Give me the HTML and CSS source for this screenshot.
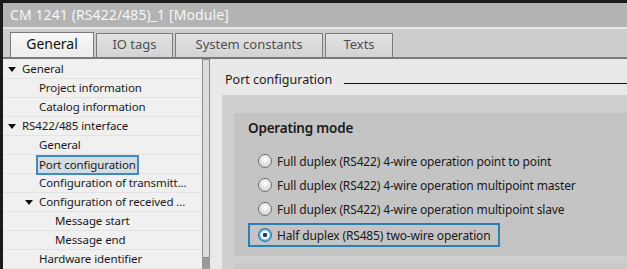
FILE: index.html
```html
<!DOCTYPE html>
<html lang="en">

<head>
    <meta charset="UTF-8">
    <title>CM 1241 Properties</title>
    <link rel="stylesheet" href="styles.css">
</head>

<body>
    <div class="frame">
        <div class="title">CM 1241 (RS422/485)_1 [Module]</div>
        <div class="tabs">
            <div class="tab active">General</div>
            <div class="tab">IO tags</div>
            <div class="tab">System constants</div>
            <div class="tab">Texts</div>
        </div>

        <div class="main">
            <div class="tree">
                <div class="row lv0"><span class="tri"></span>General</div>
                <div class="row lv1">Project information</div>
                <div class="row lv1">Catalog information</div>
                <div class="row lv0"><span class="tri"></span>RS422/485 interface</div>
                <div class="row lv1">General</div>
                <div class="row lv1"><span class="sel">Port configuration</span></div>
                <div class="row lv1">Configuration of transmitt...</div>
                <div class="row lv1 open"><span class="tri"></span>Configuration of received ...</div>
                <div class="row lv2">Message start</div>
                <div class="row lv2">Message end</div>
                <div class="row lv1">Hardware identifier</div>
            </div>
            <div class="scroll">
                <div class="track"></div>
                <div class="thumb"></div>
            </div>

            <div class="content">
                <div class="heading">
                    <span>Port configuration</span>
                    <div class="rule"></div>
                </div>
                <div class="section">
                    <div class="group">
                        <div class="group-title">Operating mode</div>
                        <div class="options">
                            <div class="opt"><span class="radio"></span>Full duplex (RS422) 4-wire operation point to point</div>
                            <div class="opt"><span class="radio"></span>Full duplex (RS422) 4-wire operation multipoint master</div>
                            <div class="opt"><span class="radio"></span>Full duplex (RS422) 4-wire operation multipoint slave</div>
                            <div class="opt checked"><span class="radio"></span>Half duplex (RS485) two-wire operation</div>
                        </div>
                    </div>
                    <div class="group next"></div>
                </div>
            </div>
        </div>
    </div>
</body>

</html>
```

FILE: styles.css
```css
* {
    box-sizing: border-box;
}

body {
    margin: 0;
    width: 627px;
    height: 269px;
    overflow: hidden;
    font-family: "Noto Sans", "Open Sans", sans-serif;
    font-size: 12px;
    color: #1a1a1a;
}

.frame {
    height: 269px;
    border-top: 3px solid #1b1b1b;
    border-left: 3px solid #1b1b1b;
    background-color: #e9e9e9;
    display: flex;
    flex-direction: column;
}

.title {
    height: 26px;
    line-height: 24px;
    padding-left: 7px;
    background-color: #b3b3b3;
    color: #f6f6f6;
    font-size: 14px;
    letter-spacing: 0.1px;
    border-bottom: 2px solid #e6e6e6;
}

.tabs {
    height: 30px;
    background-color: #cdcdcd;
    border-bottom: 2px solid #7a7a7a;
    display: flex;
    align-items: flex-end;
    padding-left: 7px;
    gap: 2px;
}

.tab {
    height: 24px;
    line-height: 21px;
    border: 1px solid #7a7a7a;
    border-bottom: none;
    background: linear-gradient(#e2e2e2, #d3d3d3);
    color: #505050;
    font-size: 13px;
    text-align: center;
}

.tab:nth-child(1) {
    width: 84px;
}

.tab:nth-child(2) {
    width: 77px;
}

.tab:nth-child(3) {
    width: 148px;
}

.tab:nth-child(4) {
    width: 68px;
}

.tab.active {
    background: linear-gradient(#f7f7f7, #ececec);
    color: #111;
    height: 25px;
    font-size: 14px;
}

.main {
    flex: 1;
    display: flex;
    min-height: 0;
}

.tree {
    width: 199px;
    background-color: #f0f0f0;
    padding-top: 1px;
}

.row {
    height: 19px;
    line-height: 18px;
    border-bottom: 1px solid #e3e3e3;
    white-space: nowrap;
    display: flex;
    align-items: center;
    font-size: 11.5px;
    letter-spacing: -0.1px;
}

.lv0 {
    padding-left: 5px;
}

.lv1 {
    padding-left: 36px;
}

.lv1.open {
    padding-left: 22px;
}

.lv2 {
    padding-left: 52px;
}

.tri {
    width: 0;
    height: 0;
    border-left: 4px solid transparent;
    border-right: 4px solid transparent;
    border-top: 5px solid #111;
    margin-right: 6px;
}

.sel {
    background-color: #d5dde3;
    border: 2px solid #3f8ac6;
    padding: 0 1px;
    margin-left: -3px;
    line-height: 15px;
    height: 20px;
    margin-top: 1px;
}

.scroll {
    width: 8px;
    display: flex;
    flex-direction: column;
    background-color: #f0f0f0;
}

.track {
    flex: 1;
    border: 1px solid #8d8d8d;
    background-color: #dddddd;
}

.thumb {
    height: 11px;
    background-color: #9a9a9a;
}

.content {
    flex: 1;
    padding-left: 12px;
    display: flex;
    flex-direction: column;
}

.heading {
    height: 36px;
    display: flex;
    align-items: center;
    font-size: 12.5px;
    padding-left: 3px;
    padding-top: 4px;
}

.rule {
    flex: 1;
    height: 1px;
    background-color: #111;
    margin-left: 12px;
    margin-top: 9px;
}

.section {
    flex: 1;
    background-color: #cfcfcf;
    padding: 18px 0 0 12px;
    display: flex;
    flex-direction: column;
    gap: 7px;
}

.group {
    background-color: #c4c4c4;
    height: 143px;
    padding: 6px 0 0 14px;
}

.group.next {
    flex: 1;
    background-color: #c9c9c9;
}

.group-title {
    font-size: 13.5px;
    font-weight: 600;
    letter-spacing: -0.2px;
    color: #1a1a1a;
    height: 31px;
}

.options {
    display: flex;
    flex-direction: column;
    gap: 2px;
}

.opt {
    height: 22px;
    display: flex;
    align-items: center;
    padding-left: 9px;
    white-space: nowrap;
    font-size: 12px;
    letter-spacing: -0.15px;
    width: 252px;
    border: 1px solid transparent;
}

.opt.checked {
    border: 2px solid #2f7fb5;
    padding-left: 8px;
    height: 24px;
    margin-top: 1px;
}

.radio {
    width: 14px;
    height: 14px;
    border-radius: 50%;
    border: 1px solid #6f6f6f;
    background: radial-gradient(circle at 50% 35%, #ffffff, #d2d2d2 80%);
    margin-right: 5px;
    flex-shrink: 0;
}

.checked .radio {
    border-color: #2c6e9e;
    background: radial-gradient(circle, #1d3f63 0 2px, #ffffff 2.5px 4px, #5bb6e8 5px);
}
```
